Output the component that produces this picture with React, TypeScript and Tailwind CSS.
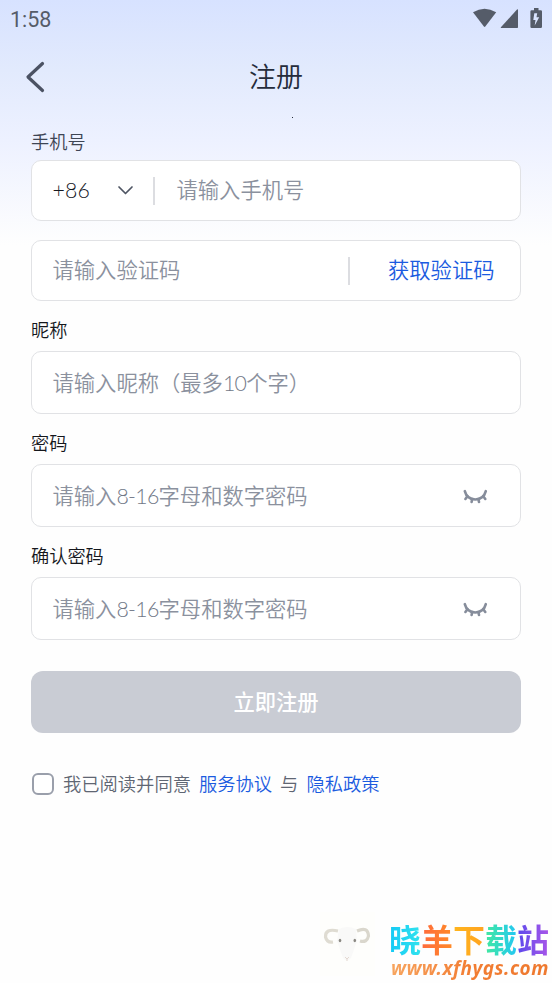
import React, { useState } from 'react';

const ClosedEye: React.FC = () => (
  <svg
    width="26"
    height="16"
    viewBox="0 0 26 16"
    fill="none"
    stroke="#868d9b"
    strokeWidth="2.6"
    strokeLinecap="round"
    className="mt-[3px]"
  >
    <path d="M1.800 2.200C3.200 7.500 7 10.500 12.300 10.500S21.400 7.500 22.800 2.200" />
    <path d="M4.500 7.200L2.400 10M9.200 10.100L8.600 13M15.400 10.100L16 13M20.200 7.200L22.300 10" />
  </svg>
);

const StatusBar: React.FC = () => (
  <div className="flex h-[38px] items-center justify-between pl-[10px] pr-[9px] text-[#555c69]">
    <span className="pt-[2px] font-[Roboto] text-[21.500px] font-[450] leading-[38px]">1:58</span>
    <svg width="71" height="22" viewBox="0 0 71 22" fill="#555c69" className="-mt-[1px]">
      <path d="M1 4.300Q12.500-2.700 24.200 4.300L13.300 18.600Q12.600 19.400 11.900 18.600Z" />
      <path d="M46 2v17.300q0 .7-.7.700H29.500q-1.200 0-.4-.9L45 1.600q1-.9 1 .4Z" />
      <path
        fillRule="evenodd"
        d="M62 0h4.500v2.200h2.300q1.200 0 1.200 1.200v15.400q0 1.200-1.200 1.200H59.600q-1.200 0-1.200-1.200V3.400q0-1.200 1.200-1.200H62ZM65.200 5.200H62.300L61.300 12H63.500L62.700 17.500L67.200 9.300H64.500Z"
      />
    </svg>
  </div>
);

interface FieldProps {
  label: string;
  children: React.ReactNode;
  password?: boolean;
}

const Field: React.FC<FieldProps> = ({ label, children, password }) => (
  <div>
    <div className="h-[50px] pt-[15px] text-[18.200px] font-[350] leading-[26px] text-[#15171c]">{label}</div>
    <div className="flex h-[63px] items-center justify-between rounded-[10px] border border-[#e1e2e5] bg-white pl-[20.500px] pr-[31px] text-[21.300px] font-[350] text-[#8b919e]">
      <span className="whitespace-nowrap">{children}</span>
      {password && <ClosedEye />}
    </div>
  </div>
);

const Digits: React.FC<{ children: string }> = ({ children }) => (
  <span className="font-[Lato] font-light tracking-[-0.700px] text-[#717887]">{children}</span>
);

const logoChars = [
  { char: '晓', color: 'from-[#12c9f5] to-[#31e3ee]' },
  { char: '羊', color: 'from-[#ff6a3c] to-[#ff8a25]' },
  { char: '下', color: 'from-[#ffb51c] to-[#ffa321]' },
  { char: '载', color: 'from-[#43e89c] to-[#25c6f3]' },
  { char: '站', color: 'from-[#5b48ec] to-[#a855e8]' },
];

const Watermark: React.FC = () => (
  <div className="flex items-start pl-[320px]">
    <svg width="69" height="64" viewBox="0 0 69 64" className="shrink-0">
      <path d="M0 0h55v64H0z" fill="#fefefc" />
      <path d="M19 17Q27 13 36 17L37 29L31 46Q27 51 23 46L17 29Z" fill="#f9f9f8" />
      <path d="M18 19Q5 16 5.500 25Q7 31 13 30" fill="none" stroke="#dfdcd2" strokeWidth="3.200" />
      <path d="M37 19Q48 14 48.500 24Q47 31 40 29" fill="none" stroke="#dad7cd" strokeWidth="3.200" />
      <ellipse cx="20" cy="28.500" rx="1.300" ry="1.700" fill="#8b8983" />
      <ellipse cx="34.800" cy="28.500" rx="1.300" ry="1.700" fill="#8b8983" />
      <path d="M25 45l2 2 2-2M27 47v2" fill="none" stroke="#e3d8d1" strokeWidth="1" />
    </svg>
    <div className="pt-[10px]">
      <div className="flex h-[36px] font-['Liberation_Sans','Noto_Sans_CJK_SC',sans-serif] text-[32px] font-bold leading-[38px]">
        {logoChars.map(({ char, color }) => (
          <span key={char} className={`bg-gradient-to-r bg-clip-text text-transparent ${color}`}>
            {char}
          </span>
        ))}
      </div>
      <div className="h-[24px] w-[161px] whitespace-nowrap bg-gradient-to-r from-[#f7a660] via-[#f27d32] to-[#ee792f] bg-clip-text pl-[2px] font-['Noto_Sans'] text-[19px] font-bold italic leading-[20px] tracking-[0.450px] text-transparent">
        www.xfhygs.com
      </div>
    </div>
  </div>
);

const RegisterPage: React.FC = () => {
  const [agreed, setAgreed] = useState(false);

  return (
    <div className="flex h-[983px] w-[552px] flex-col overflow-hidden bg-[#fefefe] bg-[linear-gradient(180deg,#d7e2ff_0px,#e2eafd_70px,#edf1ff_140px,#fefefe_245px)] font-['Noto_Sans_CJK_SC',sans-serif]">
      <StatusBar />

      {/* Header */}
      <header className="relative flex h-[78px] items-center justify-center">
        <button type="button" className="absolute left-[25px] top-[22px]">
          <svg width="22" height="34" viewBox="0 0 22 34" fill="none" stroke="#4b5263" strokeWidth="3.2" strokeLinecap="round" strokeLinejoin="round">
            <path d="M17.500 3.500L3 17L17.500 30.500" />
          </svg>
        </button>
        <h1 className="pb-[2px] text-[27px] font-[350] leading-[40px] text-[#252c3b]">注册</h1>
        <i className="absolute left-[292px] top-[79px] h-px w-px bg-[#252c3b]" />
      </header>

      <main className="px-[31px]">
        {/* Phone number */}
        <div className="h-[44px] pt-[12px] text-[18.200px] font-[350] leading-[26px] text-[#3e4554]">手机号</div>
        <div className="flex h-[61px] items-center rounded-[10px] border border-[#e1e2e5] bg-white pl-[20.500px] text-[21.300px] font-[350]">
          <span className="w-[64.500px] font-[Lato] font-light tracking-[0.200px] text-[#15181f]">+86</span>
          <svg width="17" height="11" viewBox="0 0 17 11" fill="none" stroke="#4e5563" strokeWidth="1.700" strokeLinecap="round" strokeLinejoin="round">
            <path d="M2 2L8.500 8.500L15 2" />
          </svg>
          <div className="ml-[19px] h-[28px] w-[2px] bg-[#dcdde1]" />
          <span className="ml-[21.500px] pb-[3px] text-[#8b919e]">请输入手机号</span>
        </div>

        {/* Verification code */}
        <div className="mt-[19px] flex h-[61px] items-center rounded-[10px] border border-[#e1e2e5] bg-white pl-[20.500px] text-[21.300px] font-[350]">
          <span className="w-[295.500px] pb-[3px] text-[#8b919e]">请输入验证码</span>
          <div className="h-[28px] w-[2px] bg-[#dcdde1]" />
          <button type="button" className="ml-[38px] pb-[3px] text-[#1b5be0]">获取验证码</button>
        </div>

        <Field label="昵称">
          请输入昵称（最多<Digits>10</Digits>个字）
        </Field>
        <Field label="密码" password>
          请输入<Digits>8-16</Digits>字母和数字密码
        </Field>
        <Field label="确认密码" password>
          请输入<Digits>8-16</Digits>字母和数字密码
        </Field>

        <button
          type="button"
          className="mt-[31px] block h-[62px] w-full rounded-[12px] bg-[#c9ccd4] pb-[2px] text-[21.300px] font-medium text-white"
        >
          立即注册
        </button>

        {/* Agreement */}
        <div className="mt-[38px] flex h-[26px] items-center text-[18.300px] font-[350] text-[#5f6673]">
          <button
            type="button"
            onClick={() => setAgreed(!agreed)}
            className={`ml-px h-[22px] w-[22px] shrink-0 rounded-[6px] border-2 border-[#9a9fab] ${agreed ? 'bg-[#1b5be0]' : 'bg-white'}`}
          />
          <span className="ml-[9px]">我已阅读并同意</span>
          <span className="ml-[8px] text-[#1b5be0]">服务协议</span>
          <span className="ml-[8px]">与</span>
          <span className="ml-[8px] text-[#1b5be0]">隐私政策</span>
        </div>
      </main>

      <div className="mt-[115px]">
        <Watermark />
      </div>
    </div>
  );
};

export default RegisterPage;
